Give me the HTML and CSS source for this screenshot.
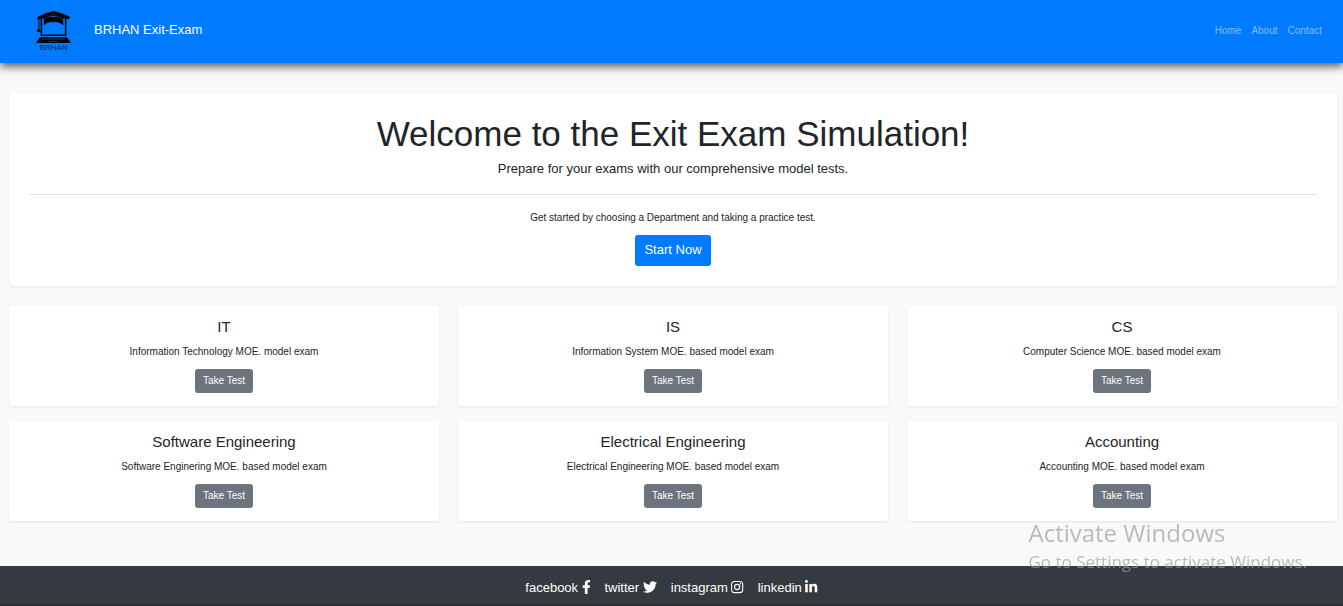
FILE: index.html
```
<!DOCTYPE html>
<html lang="en">
<head>
<meta charset="utf-8">
<meta name="viewport" content="width=device-width, initial-scale=1">
<title>BRHAN Exit-Exam</title>
<link rel="stylesheet" href="styles.css">
</head>
<body>
<header class="navbar">
  <a class="brand" href="#">
    <span class="logo">
      <svg class="logo-mark" viewBox="0 0 36 34" aria-hidden="true">
        <path d="M18 0 27 2.500 35 6 34 8.500 30 8 18 3 6 8 1 8.500 2 6 9 2.500Z"/>
        <path d="M8 4 18 1 28 4 29 8 18 5 7 8Z"/>
        <path d="M8 8Q18 4 28 8L28 15Q24 11 18 11.500Q12 11 8 15Z"/>
        <path d="M5.500 7V25H30.500V7" fill="none" stroke="#000" stroke-width="1.600"/>
        <path d="M2.500 7V18L0.500 21 5 22 3.500 18V7Z"/>
        <path d="M12 6 18 3.500 23 6 29 11" fill="none" stroke="#2b4a3a" stroke-width=".7"/>
        <path d="M4 27H32L36 33H0Z"/>
        <path d="M6 29H30M13 31.500H23" stroke="#007bff" stroke-width=".5"/>
      </svg>
      <span class="logo-text">BRHAN</span>
    </span>
    <span class="brand-name">BRHAN Exit-Exam</span>
  </a>
  <nav class="nav-links">
    <a href="#">Home</a>
    <a href="#">About</a>
    <a href="#">Contact</a>
  </nav>
</header>

<main class="content">
  <section class="hero">
    <h1 class="hero-title">Welcome to the Exit Exam Simulation!</h1>
    <p class="lead">Prepare for your exams with our comprehensive model tests.</p>
    <hr class="divider">
    <p class="hero-note">Get started by choosing a Department and taking a practice test.</p>
    <button class="btn btn-primary" type="button">Start Now</button>
  </section>

  <section class="cards">
    <article class="card">
      <h2 class="card-title">IT</h2>
      <p class="card-text">Information Technology MOE. model exam</p>
      <button class="btn btn-secondary" type="button">Take Test</button>
    </article>
    <article class="card">
      <h2 class="card-title">IS</h2>
      <p class="card-text">Information System MOE. based model exam</p>
      <button class="btn btn-secondary" type="button">Take Test</button>
    </article>
    <article class="card">
      <h2 class="card-title">CS</h2>
      <p class="card-text">Computer Science MOE. based model exam</p>
      <button class="btn btn-secondary" type="button">Take Test</button>
    </article>
    <article class="card">
      <h2 class="card-title">Software Engineering</h2>
      <p class="card-text">Software Enginering MOE. based model exam</p>
      <button class="btn btn-secondary" type="button">Take Test</button>
    </article>
    <article class="card">
      <h2 class="card-title">Electrical Engineering</h2>
      <p class="card-text">Electrical Engineering MOE. based model exam</p>
      <button class="btn btn-secondary" type="button">Take Test</button>
    </article>
    <article class="card">
      <h2 class="card-title">Accounting</h2>
      <p class="card-text">Accounting MOE. based model exam</p>
      <button class="btn btn-secondary" type="button">Take Test</button>
    </article>
  </section>
</main>

<footer class="footer">
  <a href="#">facebook
    <svg class="icon" viewBox="0 0 320 512" aria-hidden="true"><path d="M279.140 288l14.220-92.660h-88.910v-60.130c0-25.350 12.420-50.060 52.240-50.060h40.420V6.260S260.430 0 225.360 0c-73.220 0-121.080 44.380-121.080 124.720v70.620H22.890V288h81.390v224h100.170V288z"/></svg></a>
  <a href="#">twitter
    <svg class="icon" viewBox="0 0 512 512" aria-hidden="true"><path d="M459.370 151.716c.325 4.548.325 9.097.325 13.645 0 138.720-105.583 298.558-298.558 298.558-59.452 0-114.680-17.219-161.137-47.106 8.447.974 16.568 1.299 25.340 1.299 49.055 0 94.213-16.568 130.274-44.832-46.132-.975-84.792-31.188-98.112-72.772 6.498.974 12.995 1.624 19.818 1.624 9.421 0 18.843-1.300 27.614-3.573-48.081-9.747-84.143-51.980-84.143-102.985v-1.299c13.969 7.797 30.214 12.670 47.431 13.319-28.264-18.843-46.781-51.005-46.781-87.391 0-19.492 5.197-37.360 14.294-52.954 51.655 63.675 129.300 105.258 216.365 109.807-1.624-7.797-2.599-15.918-2.599-24.040 0-57.828 46.782-104.934 104.934-104.934 30.213 0 57.502 12.670 76.670 33.137 23.715-4.548 46.456-13.320 66.599-25.340-7.798 24.366-24.366 44.833-46.132 57.827 21.117-2.273 41.584-8.122 60.426-16.243-14.292 20.791-32.161 39.308-52.628 54.253z"/></svg></a>
  <a href="#">instagram
    <svg class="icon" viewBox="0 0 448 512" aria-hidden="true"><rect x="20" y="52" width="408" height="408" rx="112" fill="none" stroke="currentColor" stroke-width="40"/><circle cx="224" cy="256" r="94" fill="none" stroke="currentColor" stroke-width="41"/><circle cx="344" cy="136" r="27"/></svg></a>
  <a href="#">linkedin
    <svg class="icon" viewBox="0 0 448 512" aria-hidden="true"><path d="M100.280 448H7.400V148.900h92.880zM53.790 108.100C24.090 108.100 0 83.500 0 53.800a53.790 53.790 0 0 1 107.580 0c0 29.700-24.100 54.300-53.790 54.300zM447.900 448h-92.680V302.400c0-34.700-.7-79.200-48.290-79.200-48.290 0-55.690 37.700-55.690 76.700V448h-92.780V148.900h89.080v40.800h1.300c12.400-23.500 42.690-48.300 87.880-48.300 94 0 111.280 61.900 111.280 142.300V448z"/></svg></a>
</footer>

<aside class="watermark">
  <p class="watermark-title">Activate Windows</p>
  <p class="watermark-text">Go to Settings to activate Windows.</p>
</aside>
</body>
</html>
```
FILE: styles.css
```
* { box-sizing: border-box; }

body {
  margin: 0;
  min-height: 100vh;
  display: flex;
  flex-direction: column;
  background: #f8f9fa;
  color: #212529;
  font: 10px/15px "Liberation Sans", Arial, sans-serif;
}

h1, h2, p { margin: 0; font-weight: 400; }
a { color: inherit; text-decoration: none; }

.navbar {
  display: flex;
  align-items: center;
  justify-content: space-between;
  padding: 11px 21px 9px 35px;
  background: #007bff;
  box-shadow: 0 4px 8px rgba(0, 0, 0, .6);
}

.brand {
  display: flex;
  align-items: center;
  gap: 22px;
  color: #fff;
}

.logo {
  display: flex;
  flex-direction: column;
  align-items: center;
  padding-bottom: 2px;
  color: #001f4d;
}

.logo-mark { width: 37px; height: 33px; }
.logo-text { font-size: 8px; line-height: 8px; }
.brand-name { font-size: 13px; line-height: 20px; padding-bottom: 6px; }

.nav-links {
  display: flex;
  gap: 10px;
  padding-bottom: 4px;
  color: rgba(255, 255, 255, .5);
}

.content { flex: 1; padding: 30px 6px 45px 9px; }

.hero, .card {
  background: #fff;
  text-align: center;
  box-shadow: 0 1px 3px rgba(0, 0, 0, .08);
}

.hero {
  padding: 20px;
  margin-bottom: 20px;
  border-radius: 5px;
}

.hero-title { font-size: 35px; line-height: 42px; margin-bottom: 4px; }
.lead { font-size: 13px; line-height: 20px; }

.divider {
  margin: 15px 0;
  border: 0;
  border-top: 1px solid #e2e3e4;
}

.hero-note { margin-bottom: 10px; }

.cards {
  display: grid;
  grid-template-columns: repeat(3, 1fr);
  gap: 15px 19px;
}

.card { padding: 12px 12px 13px; border-radius: 3px; }
.card-title { font-size: 15px; line-height: 18px; margin-bottom: 8px; }
.card-text { margin-bottom: 10px; }

.btn {
  display: block;
  margin: 0 auto;
  border: 0;
  border-radius: 3px;
  color: #fff;
  font-family: inherit;
  cursor: pointer;
}

.btn-primary {
  padding: 5px 9px 6px;
  background: #007bff;
  font-size: 13px;
  line-height: 20px;
}

.btn-secondary {
  padding: 4px 8px 5px;
  background: #6c757d;
  font-size: 10px;
  line-height: 15px;
}

.footer {
  display: flex;
  justify-content: center;
  gap: 14px;
  padding: 12px 0 6px;
  border-bottom: 2px solid #2e2f33;
  background: #343a40;
  color: #fff;
  font-size: 13px;
  line-height: 20px;
}

.icon {
  height: 14px;
  vertical-align: -2px;
  fill: currentColor;
}

.watermark {
  position: fixed;
  right: 36px;
  bottom: 31px;
  color: rgba(160, 160, 160, .7);
  font-family: "Open Sans", "Noto Sans", sans-serif;
  pointer-events: none;
}

.watermark-title { font-size: 24px; line-height: 32px; }
.watermark-text { font-size: 17px; line-height: 26px; }
```
